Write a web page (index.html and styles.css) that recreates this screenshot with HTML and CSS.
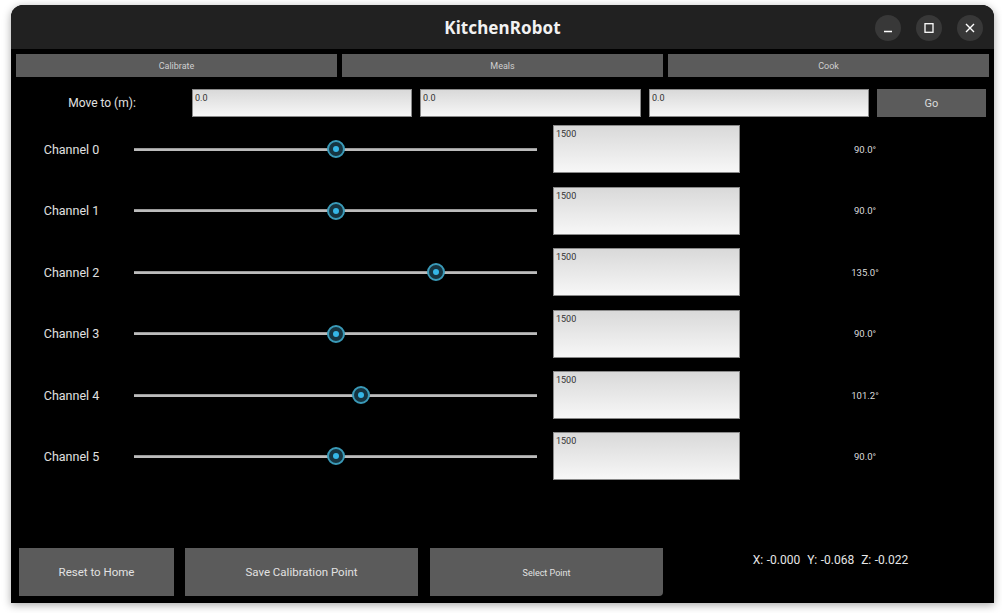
FILE: index.html
```html
<!DOCTYPE html>
<html>
<head>
<meta charset="utf-8">
<link rel="stylesheet" href="styles.css">
</head>
<body>
<div class="window">
  <div class="titlebar">
    <div class="title">KitchenRobot</div>
    <div class="controls">
      <span class="ctl"><svg width="12" height="12" viewBox="0 0 12 12"><path d="M2 9.5h8" stroke="#fff" stroke-width="1.4"/></svg></span>
      <span class="ctl"><svg width="12" height="12" viewBox="0 0 12 12"><rect x="2" y="1.7" width="8" height="8.6" fill="none" stroke="#fff" stroke-width="1.3"/></svg></span>
      <span class="ctl"><svg width="12" height="12" viewBox="0 0 12 12"><path d="M2 2L10 10M10 2L2 10" stroke="#fff" stroke-width="1.4"/></svg></span>
    </div>
  </div>
  <div class="content">
    <div class="tabs">
      <div class="tab">Calibrate</div>
      <div class="tab">Meals</div>
      <div class="tab">Cook</div>
    </div>
    <div class="move-row">
      <div class="move-label">Move to (m):</div>
      <div class="field">0.0</div>
      <div class="field">0.0</div>
      <div class="field">0.0</div>
      <div class="go">Go</div>
    </div>
    <div class="channels">
      <div class="channel">
        <div class="ch-label">Channel 0</div>
        <div class="slider"><div class="track"></div><div class="knob" style="left:202px"></div></div>
        <div class="pwm">1500</div>
        <div class="angle">90.0°</div>
      </div>
      <div class="channel">
        <div class="ch-label">Channel 1</div>
        <div class="slider"><div class="track"></div><div class="knob" style="left:202px"></div></div>
        <div class="pwm">1500</div>
        <div class="angle">90.0°</div>
      </div>
      <div class="channel">
        <div class="ch-label">Channel 2</div>
        <div class="slider"><div class="track"></div><div class="knob" style="left:302px"></div></div>
        <div class="pwm">1500</div>
        <div class="angle">135.0°</div>
      </div>
      <div class="channel">
        <div class="ch-label">Channel 3</div>
        <div class="slider"><div class="track"></div><div class="knob" style="left:202px"></div></div>
        <div class="pwm">1500</div>
        <div class="angle">90.0°</div>
      </div>
      <div class="channel">
        <div class="ch-label">Channel 4</div>
        <div class="slider"><div class="track"></div><div class="knob" style="left:227px"></div></div>
        <div class="pwm">1500</div>
        <div class="angle">101.2°</div>
      </div>
      <div class="channel">
        <div class="ch-label">Channel 5</div>
        <div class="slider"><div class="track"></div><div class="knob" style="left:202px"></div></div>
        <div class="pwm">1500</div>
        <div class="angle">90.0°</div>
      </div>
    </div>
    <div class="bottom">
      <div class="btn btn-reset">Reset to Home</div>
      <div class="btn btn-save">Save Calibration Point</div>
      <div class="btn btn-select">Select Point</div>
      <div class="coords">X: -0.000&nbsp; Y: -0.068&nbsp; Z: -0.022</div>
    </div>
  </div>
</div>
</body>
</html>
```

FILE: styles.css
```css
* { box-sizing: border-box; }
html, body { margin: 0; padding: 0; }
body {
  width: 1002px;
  height: 613px;
  background: #ffffff;
  padding: 5px 8px 10px 11px;
  font-family: Roboto, "Liberation Sans", sans-serif;
  overflow: hidden;
}
.window {
  width: 983px;
  height: 598px;
  background: #000;
  border-radius: 12px 12px 0 0;
  box-shadow: 0 2px 8px rgba(0,0,0,0.35);
  display: flex;
  flex-direction: column;
  overflow: hidden;
}
.titlebar {
  height: 44px;
  background: #212121;
  position: relative;
  display: flex;
  align-items: center;
  justify-content: center;
}
.title {
  color: #f2f2f2;
  font-family: "Noto Sans", "DejaVu Sans", sans-serif;
  font-weight: 700;
  font-size: 17px;
  letter-spacing: 0.1px;
}
.controls {
  position: absolute;
  right: 11px;
  top: 10px;
  display: flex;
  gap: 15px;
}
.ctl {
  width: 26px;
  height: 26px;
  border-radius: 50%;
  background: #383838;
  display: flex;
  align-items: center;
  justify-content: center;
}
.content {
  flex: 1;
  display: flex;
  flex-direction: column;
}
.tabs {
  margin-top: 5px;
  padding: 0 5px;
  height: 23px;
  display: flex;
  gap: 5px;
}
.tab {
  flex: 1;
  background: #5b5b5b;
  color: #d0d0d0;
  font-size: 9px;
  display: flex;
  align-items: center;
  justify-content: center;
}
.move-row {
  margin-top: 12px;
  padding-left: 5px;
  height: 28px;
  display: grid;
  grid-template-columns: 168px 220px 221px 220px 109px;
  column-gap: 8px;
}
.move-label {
  color: #e0e0e0;
  font-size: 12px;
  display: flex;
  align-items: center;
  justify-content: center;
  padding-left: 4px;
}
.field, .pwm {
  background: linear-gradient(#d9d9d9, #f7f7f7);
  border: 1px solid #8a8a8a;
  color: #333;
  font-size: 9px;
  padding: 3px 2px;
}
.go {
  background: #5b5b5b;
  color: #dcdcdc;
  font-size: 11px;
  display: flex;
  align-items: center;
  justify-content: center;
}
.channels {
  margin-top: 1.8px;
  display: flex;
  flex-direction: column;
}
.channel {
  height: 61.4px;
  display: grid;
  grid-template-columns: 110px 403px 195px 244px;
  column-gap: 8px;
  padding-left: 5px;
  align-items: center;
}
.channel .pwm {
  margin-left: 8px;
  height: 48px;
  width: 187px;
}
.ch-label {
  color: #e0e0e0;
  font-size: 12.5px;
  text-align: center;
  padding-left: 1px;
}
.slider {
  position: relative;
  height: 20px;
}
.track {
  position: absolute;
  left: 0;
  right: 0;
  top: 8.5px;
  height: 3px;
  background: #bcbcbc;
  border-top: 1px solid #9a9a9a;
}
.knob {
  position: absolute;
  top: 1px;
  width: 18px;
  height: 18px;
  margin-left: -9px;
  border-radius: 50%;
  background: #163440;
  border: 2px solid #3a9ab8;
  display: flex;
  align-items: center;
  justify-content: center;
}
.knob::after {
  content: "";
  width: 6px;
  height: 6px;
  border-radius: 50%;
  background: #35b6e6;
}
.angle {
  color: #dcdcdc;
  font-size: 9.5px;
  text-align: center;
  margin-left: -10px;
}
.bottom {
  margin-top: 61px;
  height: 48px;
  display: flex;
  padding-left: 8px;
}
.btn {
  background: #5b5b5b;
  color: #e2e2e2;
  font-size: 11.5px;
  display: flex;
  align-items: center;
  justify-content: center;
}
.btn-reset { width: 155px; }
.btn-save { width: 233px; margin-left: 11px; }
.btn-select { width: 233px; margin-left: 12px; font-size: 9px; border-bottom-right-radius: 4px; padding-top: 2px; }
.coords {
  flex: 1;
  color: #e6e6e6;
  font-size: 12px;
  word-spacing: 0.5px;
  text-align: center;
  padding-top: 5px;
  padding-left: 4px;
}
```
